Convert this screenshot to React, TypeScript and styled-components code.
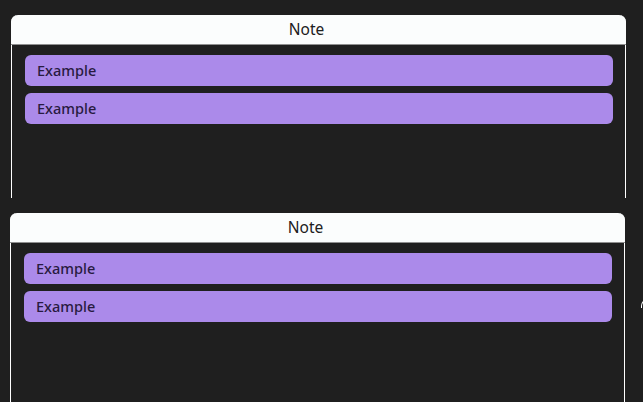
import styled, { createGlobalStyle } from "styled-components";

const GlobalStyle = createGlobalStyle`
  html, body {
    margin: 0;
    padding: 0;
    background-color: #1f1f1f;
    overflow: hidden;
    font-family: "Noto Sans", "Open Sans", Arial, sans-serif;
  }
`;

const Page = styled.div`
  display: flex;
  flex-direction: column;
  gap: 15px;
  padding-top: 15px;
  width: 643px;
  height: 402px;
`;

const Row = styled.div`
  display: flex;
  align-items: flex-start;
  gap: 16px;
`;

const Card = styled.div<{ $offset: number; $height: number }>`
  flex: none;
  margin-left: ${(p) => p.$offset}px;
  width: 615px;
  height: ${(p) => p.$height}px;
  border-left: 1px solid #ffffff;
  border-right: 1px solid #ffffff;
  border-radius: 7px 7px 0 0;
  box-sizing: border-box;
  display: flex;
  flex-direction: column;
`;

const Header = styled.div`
  height: 30px;
  margin: 0 -1px;
  padding: 0 24px 1px 0;
  box-sizing: border-box;
  background-color: #fbfdfd;
  border-radius: 7px 7px 0 0;
  border-bottom: 1px solid #8f8f8f;
  display: flex;
  align-items: center;
  justify-content: center;
  font-size: 15.5px;
  font-weight: 400;
  color: #202020;
`;

const List = styled.ul`
  list-style: none;
  margin: 0;
  padding: 10px 12px 0 13px;
  display: flex;
  flex-direction: column;
  gap: 7px;
`;

const Item = styled.li`
  height: 31px;
  box-sizing: border-box;
  background-color: #ab8aea;
  border-radius: 6px;
  display: flex;
  align-items: center;
  padding: 0 0 2px 12px;
  font-size: 14.5px;
  font-weight: 500;
  color: #281a40;
`;

const Peek = styled.div`
  flex: none;
  margin-top: 86px;
  width: 20px;
  height: 8px;
  border-left: 1px solid #ffffff;
  border-top: 1px solid #ffffff;
  border-radius: 7px 0 0 0;
`;

const Note = ({ offset, height }: { offset: number; height: number }) => (
  <Card $offset={offset} $height={height}>
    <Header>Note</Header>
    <List>
      <Item>Example</Item>
      <Item>Example</Item>
    </List>
  </Card>
);

export default function App() {
  return (
    <>
      <GlobalStyle />
      <Page>
        <Note offset={11} height={183} />
        <Row>
          <Note offset={10} height={200} />
          <Peek />
        </Row>
      </Page>
    </>
  );
}
